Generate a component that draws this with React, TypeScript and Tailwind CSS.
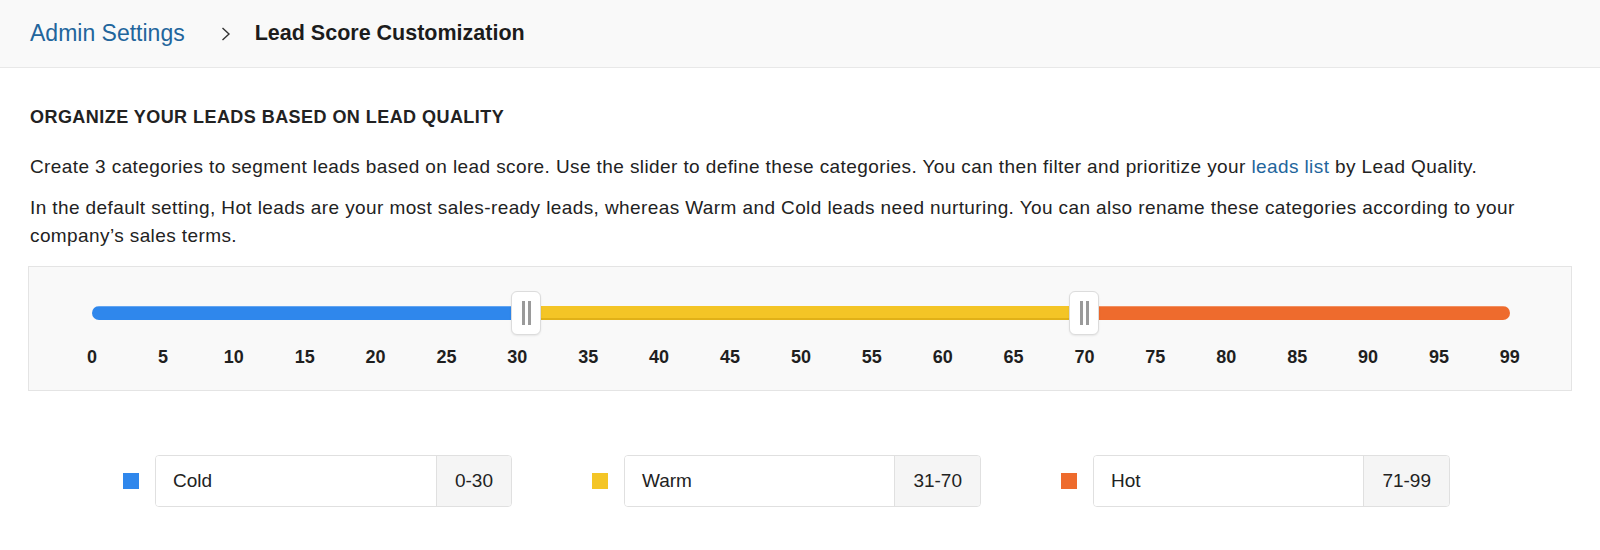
import React from "react";

const ticks = [0, 5, 10, 15, 20, 25, 30, 35, 40, 45, 50, 55, 60, 65, 70, 75, 80, 85, 90, 95, 99];

const categories = [
  { name: "Cold", range: "0-30", color: "bg-[#2f87ec]" },
  { name: "Warm", range: "31-70", color: "bg-[#f4c526]" },
  { name: "Hot", range: "71-99", color: "bg-[#ee6b2d]" },
];

const Handle = ({ className }: { className: string }) => (
  <div
    className={`absolute top-[-15px] h-[44px] w-[30px] rounded-[6px] border border-[#dcdcdc] bg-white shadow-[0_1px_2px_rgba(0,0,0,0.08)] flex items-center justify-center gap-[3px] ${className}`}
  >
    <span className="block h-[24px] w-[3px] bg-[#9a9a9a]" />
    <span className="block h-[24px] w-[3px] bg-[#9a9a9a]" />
  </div>
);

const App = () => {
  return (
    <div className="min-h-[550px] bg-white text-[#222] font-['Liberation_Sans',Arial,sans-serif]">
      <header className="h-[68px] bg-[#f9f9f9] border-b border-[#e8e8e8] flex items-center pl-[30px]">
        <a className="text-[23px] text-[#22659c] cursor-pointer">Admin Settings</a>
        <svg className="ml-[36px]" width="10" height="14" viewBox="0 0 10 14" fill="none">
          <path d="M1.5 1 L8 7 L1.5 13" stroke="#333" strokeWidth="1.4" />
        </svg>
        <span className="ml-[24px] text-[21.5px] font-bold text-[#1c1c1c]">Lead Score Customization</span>
      </header>

      <main className="px-[28px]">
        <h2 className="pt-[37px] pl-[2px] text-[18px] leading-[24px] font-bold tracking-[0.45px] text-[#222]">
          ORGANIZE YOUR LEADS BASED ON LEAD QUALITY
        </h2>
        <p className="mt-[24px] pl-[2px] text-[19px] leading-[28px] tracking-[0.4px]">
          Create 3 categories to segment leads based on lead score. Use the slider to define these
          categories. You can then filter and prioritize your{" "}
          <a className="text-[#22659c] cursor-pointer">leads list</a> by Lead Quality.
        </p>
        <p className="mt-[13px] pl-[2px] text-[19px] leading-[28px] tracking-[0.4px]">
          In the default setting, Hot leads are your most sales-ready leads, whereas Warm and Cold
          leads need nurturing. You can also rename these categories according to your company’s
          sales terms.
        </p>

        <div className="mt-[16px] h-[125px] border border-[#e4e4e4] bg-[#f9f9f9] pl-[63px] pr-[61px] pt-[39px]">
          <div className="relative h-[14px]">
            <div className="flex h-[14px] overflow-hidden rounded-full">
              <div className="w-[433px] bg-[#2f87ec] shadow-[inset_0_1px_0_rgba(255,255,255,0.25)]" />
              <div className="w-[559px] bg-[#f4c526] shadow-[inset_0_-2px_0_rgba(190,140,0,0.35)]" />
              <div className="flex-1 bg-[#ee6b2d] shadow-[inset_0_1px_0_rgba(255,255,255,0.25)]" />
            </div>
            <Handle className="left-[419px]" />
            <Handle className="left-[977px]" />
          </div>
          <div className="mt-[27px] flex justify-between">
            {ticks.map((t) => (
              <div key={t} className="w-0 flex justify-center">
                <span className="text-[18px] leading-[20px] font-bold whitespace-nowrap text-[#1f1f1f]">{t}</span>
              </div>
            ))}
          </div>
        </div>

        <div className="mt-[64px] pl-[95px] flex gap-[80px]">
          {categories.map((c) => (
            <div key={c.name} className="flex items-center gap-[16px]">
              <span className={`block h-[16px] w-[16px] ${c.color}`} />
              <div className="flex h-[52px] w-[357px] overflow-hidden rounded-[4px] border border-[#e0e0e0]">
                <div className="flex flex-1 items-center bg-white pl-[17px] text-[19px]">{c.name}</div>
                <div className="flex items-center border-l border-[#e0e0e0] bg-[#f5f5f5] px-[18px] text-[19px]">
                  {c.range}
                </div>
              </div>
            </div>
          ))}
        </div>
      </main>
    </div>
  );
};

export default App;
